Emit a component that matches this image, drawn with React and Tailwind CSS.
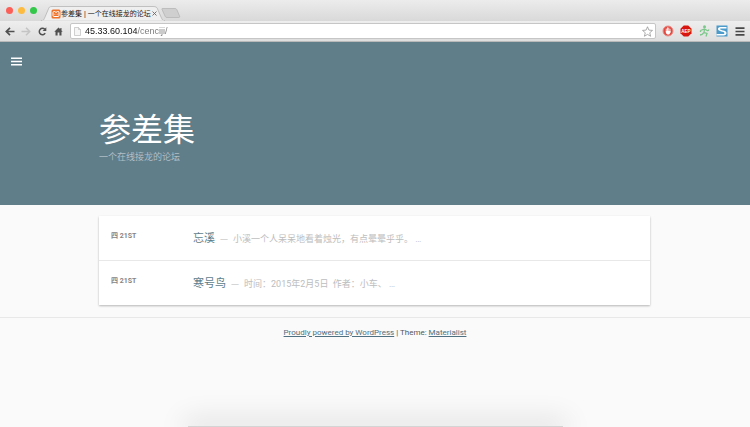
import React from 'react';

const posts = [
  { date: '四 21ST', title: '忘溪', excerpt: '小溪一个人呆呆地看着烛光，有点晕晕乎乎。 …' },
  { date: '四 21ST', title: '寒号鸟', excerpt: '时间：2015年2月5日  作者：小车、 …' },
];

function ToolButton({ label, children }) {
  return (
    <button type="button" aria-label={label} className="flex h-4 w-4 shrink-0 items-center justify-center">
      {children}
    </button>
  );
}

function TabStrip() {
  return (
    <div className="flex h-[21px] items-end bg-linear-to-b from-[#ececec] to-[#d9d9d9]">
      <div className="flex h-full items-center gap-[5px] pl-1.5">
        <button type="button" aria-label="Close" className="h-[7px] w-[7px] rounded-full bg-[#fb5f57]" />
        <button type="button" aria-label="Minimize" className="h-[7px] w-[7px] rounded-full bg-[#fdbc40]" />
        <button type="button" aria-label="Zoom" className="h-[7px] w-[7px] rounded-full bg-[#34c84a]" />
      </div>
      <div className="relative ml-1 h-[15px] w-[124px]">
        <svg className="absolute inset-0" width="124" height="15" viewBox="0 0 124 15" aria-hidden="true">
          <path d="M0 15C3 15 3 13 4 11L7 4C8 1 8.500 .5 11 .5H112C115 .5 116 1 117 4L120 11C121 13.500 122 15 124 15Z" fill="#efefef" stroke="#b5b5b5" strokeWidth=".8" />
          <path d="M1 15H123" stroke="#eeeeee" strokeWidth="1" />
        </svg>
        <div className="relative flex h-full items-center pr-2 pl-[10px]">
          <svg width="10" height="10" viewBox="0 0 20 20" className="shrink-0" aria-hidden="true">
            <rect x="1" y="1" width="18" height="18" rx="3" fill="#f07128" />
            <path d="M7 5H6A2 2 0 0 0 4 7V13A2 2 0 0 0 6 15H14A2 2 0 0 0 16 13V7A2 2 0 0 0 14 5H13M7 4L10 7.500L13 4M7 10.500H8.500M11.500 10.500H13" fill="none" stroke="#fff" strokeWidth="2" />
          </svg>
          <span className="flex-1 text-[7px] leading-[9px] whitespace-nowrap text-[#222]">参差集 | 一个在线接龙的论坛</span>
          <button type="button" aria-label="Close tab" className="flex h-2 w-2 shrink-0 items-center justify-center">
            <svg width="5" height="5" viewBox="0 0 5 5"><path d="M.5 .5L4.500 4.500M4.500 .5L.5 4.500" stroke="#666" strokeWidth=".9" /></svg>
          </button>
        </div>
      </div>
      <button type="button" aria-label="New tab" className="-ml-1 self-center pt-1">
        <svg width="20" height="10" viewBox="0 0 20 10">
          <path d="M1.500 .5H14C15 .5 15.500 1 16 2L18.500 8C19 9 18.500 9.500 17.500 9.500H6C5 9.500 4.500 9 4 8L1 1.500C.8 1 .8 .5 1.500 .5Z" fill="#cfcfcf" stroke="#b0b0b0" strokeWidth=".7" />
        </svg>
      </button>
    </div>
  );
}

function Toolbar() {
  return (
    <div className="flex h-[21px] items-center border-b border-[#b9b9b9] bg-linear-to-b from-[#eeeeee] to-[#dedede] px-0.5">
      <ToolButton label="Back">
        <svg width="10" height="9" viewBox="0 0 10 9"><path d="M5 .8L1.300 4.500L5 8.200M1.500 4.500H9.500" fill="none" stroke="#505050" strokeWidth="1.700" /></svg>
      </ToolButton>
      <ToolButton label="Forward">
        <svg width="10" height="9" viewBox="0 0 10 9"><path d="M5 .8L8.700 4.500L5 8.200M8.500 4.500H.5" fill="none" stroke="#c4c4c4" strokeWidth="1.500" /></svg>
      </ToolButton>
      <ToolButton label="Reload">
        <svg width="9" height="9" viewBox="0 0 9 9"><path d="M7.200 6.200A3.200 3.200 0 1 1 6.800 2.300" fill="none" stroke="#505050" strokeWidth="1.500" /><path d="M8.300 .3V4H4.600Z" fill="#505050" /></svg>
      </ToolButton>
      <ToolButton label="Home">
        <svg width="9" height="9" viewBox="0 0 9 9"><path d="M4.500 .5L.3 4.700H1.500V8.500H3.600V5.500H5.400V8.500H7.500V4.700H8.700L7.500 3.500V1H6.300V2.300Z" fill="#505050" /></svg>
      </ToolButton>
      <div className="ml-1 flex h-4 flex-1 items-center rounded-xs border border-[#c6c6c6] bg-white pr-0.5 pl-[3px]">
        <svg width="7" height="9" viewBox="0 0 7 9" className="shrink-0" aria-hidden="true"><path d="M.5 .5H4.500L6.500 2.500V8.500H.5ZM4.500 .5V2.500H6.500" fill="#f6f6f6" stroke="#bdbdbd" strokeWidth=".7" /></svg>
        <input
          type="text"
          aria-label="Address"
          defaultValue="45.33.60.104/cenciji/"
          className="ml-1 h-3 min-w-0 flex-1 bg-linear-to-r from-[#111] from-[52px] to-[#777] to-[52px] bg-clip-text text-[9px] leading-3 text-transparent outline-none"
        />
        <button type="button" aria-label="Bookmark" className="shrink-0">
          <svg width="11" height="11" viewBox="0 0 22 22"><path d="M11 1.500L13.800 8.200L21 8.800L15.500 13.500L17.200 20.500L11 16.800L4.800 20.500L6.500 13.500L1 8.800L8.200 8.200Z" fill="#fff" stroke="#8a8a8a" strokeWidth="1.400" /></svg>
        </button>
      </div>
      <div className="ml-1 flex items-center gap-0.5">
        <ToolButton label="AdBlock">
          <svg width="12" height="12" viewBox="0 0 24 24">
            <circle cx="12" cy="12" r="10" fill="#e2463d" stroke="#e98f8a" strokeWidth="2" />
            <path d="M8.500 8V13M11 5.500V12M13.500 6V12M16 8.500V13" stroke="#fff" strokeWidth="1.700" strokeLinecap="round" />
            <path d="M7.700 12H17V15L14.500 19H10.500L7.700 16Z" fill="#fff" />
          </svg>
        </ToolButton>
        <ToolButton label="ABP">
          <svg width="12" height="12" viewBox="0 0 24 24"><path d="M7.500 1H16.500L23 7.500V16.500L16.500 23H7.500L1 16.500V7.500Z" fill="#d9150f" /><text x="12" y="15.500" textAnchor="middle" fontSize="9" fontWeight="700" fill="#fff" fontFamily="Liberation Sans, sans-serif">AEP</text></svg>
        </ToolButton>
        <ToolButton label="Runner">
          <svg width="11" height="12" viewBox="0 0 22 24"><circle cx="11" cy="3.500" r="3" fill="#7cc78a" /><path d="M3 11L11 8L18 12M11 8L10 15L16 17L14 23M10 15L6 19L2 20M3 11V14M18 12L20 9" fill="none" stroke="#7cc78a" strokeWidth="2.600" /></svg>
        </ToolButton>
        <ToolButton label="Session">
          <svg width="12" height="12" viewBox="0 0 24 24"><rect x="1" y="1" width="22" height="22" fill="#4b9aca" /><path d="M21 4H9C5 4 4 6 4 8C4 14 17 12 17 16C17 18 15 18 13 18H1V21H15C19 21 21 19 21 16C21 10 8 11 8 8C8 7 10 7 11 7H21Z" fill="#fff" /></svg>
        </ToolButton>
        <ToolButton label="Chrome menu">
          <svg width="10" height="9" viewBox="0 0 10 9"><path d="M.5 1.200H9.500M.5 4.500H9.500M.5 7.800H9.500" stroke="#484848" strokeWidth="1.700" /></svg>
        </ToolButton>
      </div>
    </div>
  );
}

export default function App() {
  return (
    <div className="relative flex min-h-screen flex-col overflow-hidden bg-[#fafafa] font-['Liberation_Sans','Noto_Sans_CJK_SC',sans-serif]">
      <TabStrip />
      <Toolbar />
      <header className="bg-[#607d8a] px-[11px] pt-3 pb-10 font-['Roboto','Noto_Sans_CJK_SC',sans-serif]">
        <button type="button" aria-label="Menu" className="flex h-[14px] w-[11px] items-center">
          <svg width="11" height="9" viewBox="0 0 11 9"><path d="M0 1.200H11M0 4.500H11M0 7.800H11" stroke="#fff" strokeWidth="1.500" /></svg>
        </button>
        <div className="mx-[88px] pt-[42px]">
          <h1 className="text-[32px] leading-10 font-normal text-white">参差集</h1>
          <p className="text-[9px] leading-[15px] text-[#b1bfc6]">一个在线接龙的论坛</p>
        </div>
      </header>
      <main className="mt-[11px] mr-[100px] ml-[99px] bg-white font-['Roboto','Noto_Sans_CJK_SC',sans-serif] shadow-[0_1px_2px_rgba(0,0,0,0.28)]">
        {posts.map((post) => (
          <article key={post.title} className="flex h-[45px] items-center border-b border-[#e8e8e8] px-3 last:h-11 last:border-b-0">
            <time className="w-[82px] shrink-0 pb-1 text-[7px] leading-[10px] font-bold text-[#858585]">{post.date}</time>
            <div className="flex items-baseline gap-[5px] pt-0.5 whitespace-nowrap">
              <h2 className="text-[11px] leading-4 text-[#607d8a]"><a href="#post">{post.title}</a></h2>
              <p className="flex gap-[5px] text-[9px] leading-4 whitespace-pre text-[#bdbdbd]">
                <span className="font-['Noto_Sans_CJK_SC',sans-serif]">—</span>
                <span>{post.excerpt}</span>
              </p>
            </div>
          </article>
        ))}
      </main>
      <footer className="mt-3 border-t border-[#e8e8e8] pt-2 text-center font-['Roboto',sans-serif] text-[8px] leading-[14px] text-[#555]">
        <a href="#wordpress" className="text-[#4f7080] underline">Proudly powered by WordPress</a> | Theme: <a href="#theme" className="text-[#4f7080] underline">Materialist</a>
      </footer>
      <div className="mx-auto mt-auto h-px w-1/2 bg-[#d4d4d4] shadow-[0_0_28px_4px_rgba(0,0,0,0.2)]" />
    </div>
  );
}
